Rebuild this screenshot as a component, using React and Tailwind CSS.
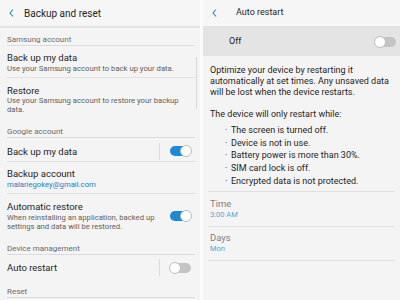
import React from 'react';

const Toggle = ({ on }) => (
  <div className={`relative w-[21px] h-[10px] rounded-full ${on ? 'bg-[#1a8ad4]' : 'bg-[#c4c4c4]'}`}>
    <div
      className={`absolute top-[-1px] w-[12px] h-[12px] rounded-full bg-white border border-[#bdbdbd] ${on ? 'right-[-1px]' : 'left-[-1px]'}`}
    />
  </div>
);

// section label above a group of rows
const Section = ({ children, pt, pb = 0 }) => (
  <div
    className="ml-[7px] mr-[5px] border-b border-[#dcdcdc] text-[8px] text-[#6b6b6b] leading-[10px]"
    style={{ paddingTop: pt, paddingBottom: pb }}
  >
    {children}
  </div>
);

const Item = ({ title, sub, subBlue, toggle, border = true, pt = 6.5, pb = 4.5 }) => (
  <div className={`ml-[7px] mr-[5px] flex items-center ${border ? 'border-b border-[#e2e2e2]' : ''}`}>
    <div className="flex-1" style={{ paddingTop: pt, paddingBottom: pb }}>
      <div className="text-[9.5px] leading-[11.5px] text-[#1f1f1f]">{title}</div>
      {sub && (
        <div className={`text-[7.7px] leading-[9px] ${subBlue ? 'text-[#1f7fc4]' : 'text-[#5e5e5e]'}`}>{sub}</div>
      )}
    </div>
    {toggle !== undefined && (
      <div className="flex items-center" style={{ paddingTop: pt - pb }}>
        {!sub && <div className="w-px h-[17px] bg-[#dcdcdc] mr-[10px]" />}
        <div className="mr-[4px]"><Toggle on={toggle} /></div>
      </div>
    )}
  </div>
);

const Chevron = () => (
  <svg width="5" height="8" viewBox="0 0 5 8" fill="none">
    <path d="M4 0.5L1 4l3 3.5" stroke="#1a8ad4" strokeWidth="1.1" />
  </svg>
);

const conditions = [
  'The screen is turned off.',
  'Device is not in use.',
  'Battery power is more than 30%.',
  'SIM card lock is off.',
  'Encrypted data is not protected.',
];

export default function App() {
  return (
    <div className="w-[400px] h-[300px] flex bg-[#fbfbfb] overflow-hidden" style={{ fontFamily: 'Roboto, "Noto Sans", sans-serif' }}>
      {/* Left: Backup and reset */}
      <div className="w-[200px] h-full bg-[#f4f4f4] relative">
        <div className="h-[28px] flex items-center border-b-2 border-[#e2e2e2] bg-[#f6f6f6]">
          <div className="ml-[9px] mr-[10px] flex"><Chevron /></div>
          <div className="text-[10px] text-[#1f1f1f]">Backup and reset</div>
        </div>
        <Section pt={7} pb={0}>Samsung account</Section>
        <Item title="Back up my data" sub="Use your Samsung account to back up your data." pt={6} pb={4.5} />
        <Item title="Restore" sub={<>Use your Samsung account to restore your backup<br />data.</>} border={false} pt={6.5} pb={5} />
        <Section pt={8}>Google account</Section>
        <Item title="Back up my data" toggle={true} pt={7.5} pb={3.5} />
        <Item title="Backup account" sub="malariegokey@gmail.com" subBlue pt={6.5} pb={4} />
        <Item title="Automatic restore" sub={<>When reinstalling an application, backed up<br />settings and data will be restored.</>} toggle={true} border={false} pt={7.5} pb={4} />
        <Section pt={9}>Device management</Section>
        <Item title="Auto restart" toggle={false} border={false} pt={7.5} pb={4} />
        <Section pt={9.5}>Reset</Section>
        <div className="absolute right-[3px] top-[57px] w-[1px] h-[52px] bg-[#d8d8d8]" />
      </div>

      {/* Right: Auto restart */}
      <div className="w-[197px] ml-[3px] h-full bg-[#f4f4f4]">
        <div className="h-[28px] flex items-center border-b-2 border-[#e2e2e2] bg-[#f6f6f6]">
          <div className="ml-[9px] mr-[19px] flex"><Chevron /></div>
          <div className="text-[9px] text-[#1f1f1f]">Auto restart</div>
        </div>
        <div className="h-[28px] bg-[#e4e4e4] flex items-center justify-between pl-[26px] pr-[4px]">
          <div className="text-[9px] text-[#1f1f1f]">Off</div>
          <Toggle on={false} />
        </div>
        <div className="px-[7px] pt-[9px] text-[9px] leading-[11px] text-[#1f1f1f]">
          <p>Optimize your device by restarting it automatically at set times. Any unsaved data will be lost when the device restarts.</p>
          <p className="mt-[11px]">The device will only restart while:</p>
          <ul className="mt-[4px] text-[9px] leading-[12.7px]">
            {conditions.map((t) => (
              <li key={t} className="flex">
                <span className="w-[21px] pl-[15px]">·</span>
                <span>{t}</span>
              </li>
            ))}
          </ul>
        </div>
        <div className="mx-[5px] mt-[3px] border-b border-[#e0e0e0]" />
        <div className="mx-[5px] pl-[2px] pt-[6px] pb-[7px] border-b border-[#e0e0e0]">
          <div className="text-[9.5px] leading-[12px] text-[#808080]">Time</div>
          <div className="text-[7.5px] leading-[9px] text-[#5aa6d6]">3:00 AM</div>
        </div>
        <div className="mx-[5px] pl-[2px] pt-[5px] pb-[7px] border-b border-[#e0e0e0]">
          <div className="text-[9.5px] leading-[12px] text-[#808080]">Days</div>
          <div className="text-[7.5px] leading-[9px] text-[#5aa6d6]">Mon</div>
        </div>
      </div>
    </div>
  );
}
